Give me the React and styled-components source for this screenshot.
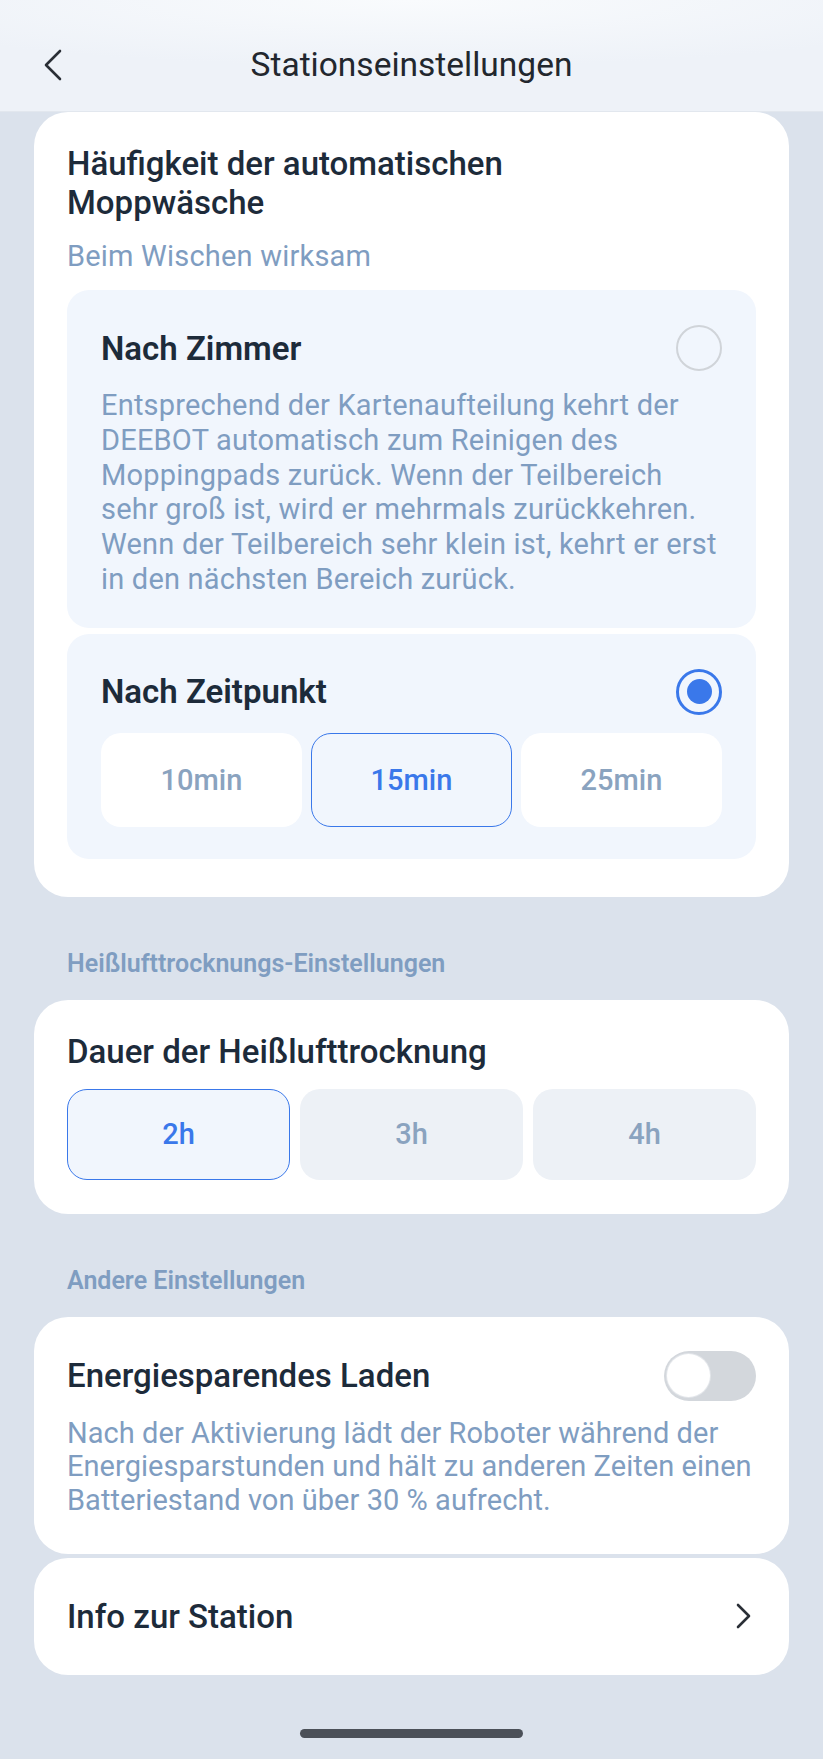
import React from "react";
import styled, { createGlobalStyle, css } from "styled-components";

const COLORS = {
  page: "#dbe2ec",
  header: "#eef2f8",
  card: "#ffffff",
  option: "#f1f6fd",
  chip: "#edf1f6",
  ink: "#1d2b3a",
  muted: "#7f9dc1",
  chipText: "#8aa3bf",
  blue: "#3a78ea",
  track: "#d3d7dc",
};

const GlobalStyle = createGlobalStyle`
  body {
    margin: 0;
    background: ${COLORS.page};
    font-family: Roboto, "Liberation Sans", sans-serif;
    -webkit-font-smoothing: antialiased;
  }
`;

const Page = styled.div`
  min-height: 1759px;
  display: flex;
  flex-direction: column;
  background: ${COLORS.page};
`;

const Header = styled.header`
  height: 111px;
  border-bottom: 1px solid #e2e7ee;
  background: radial-gradient(ellipse 70% 60% at 50% 0%, #f9fbfd 0%, ${COLORS.header} 100%);
  display: grid;
  grid-template-columns: 90px 1fr 90px;
  align-items: center;
  .title {
    text-align: center;
    font-size: 33.5px;
    color: #22272e;
    padding-top: 18px;
  }
  .back {
    padding: 18px 0 0 44px;
    display: flex;
  }
`;

const Content = styled.main`
  padding: 0 34px;
  display: flex;
  flex-direction: column;
`;

const Card = styled.section`
  background: ${COLORS.card};
  border-radius: 34px;
  padding: ${(p) => p.$pad || "32px 33px 38px"};
  ${(p) =>
    p.$gap &&
    css`
      margin-top: ${p.$gap}px;
    `}
`;

const CardTitle = styled.h2`
  margin: 0;
  font-size: 33px;
  line-height: ${(p) => p.$lh || 39}px;
  font-weight: 500;
  color: ${COLORS.ink};
  max-width: 450px;
`;

const Muted = styled.p`
  margin: ${(p) => p.$mt || 0}px 0 0;
  font-size: 29px;
  letter-spacing: ${(p) => p.$ls ?? 0.2}px;
  line-height: ${(p) => p.$lh || 35}px;
  color: ${COLORS.muted};
`;

const SectionLabel = styled.div`
  margin: 52px 0 21px 33px;
  font-size: 25px;
  line-height: 30px;
  font-weight: 600;
  color: ${COLORS.muted};
`;

const Options = styled.div`
  margin-top: 16px;
  display: flex;
  flex-direction: column;
  gap: 6px;
`;

const Option = styled.div`
  background: ${COLORS.option};
  border-radius: 22px;
  padding: 35px 34px ${(p) => p.$pb}px;
`;

const Row = styled.div`
  display: flex;
  align-items: center;
  justify-content: space-between;
  min-height: ${(p) => p.$h || 46}px;
`;

const OptionTitle = styled.div`
  font-size: 33px;
  font-weight: 600;
  color: ${COLORS.ink};
`;

const Radio = styled.span`
  width: 46px;
  height: 46px;
  box-sizing: border-box;
  border-radius: 50%;
  border: ${(p) => (p.$on ? `3px solid ${COLORS.blue}` : "2.5px solid #d0d4d9")};
  display: flex;
  align-items: center;
  justify-content: center;
  &::after {
    content: "";
    width: 25px;
    height: 25px;
    border-radius: 50%;
    background: ${(p) => (p.$on ? COLORS.blue : "transparent")};
  }
`;

const Chips = styled.div`
  margin-top: ${(p) => p.$mt}px;
  display: grid;
  grid-template-columns: repeat(3, 1fr);
  gap: ${(p) => p.$gap}px;
`;

const Chip = styled.button`
  height: ${(p) => p.$h}px;
  box-sizing: border-box;
  border-radius: 20px;
  border: 1.5px solid ${(p) => (p.$on ? COLORS.blue : "transparent")};
  background: ${(p) => (p.$on ? COLORS.option : p.$bg)};
  color: ${(p) => (p.$on ? COLORS.blue : COLORS.chipText)};
  font-family: inherit;
  font-size: 29px;
  font-weight: 500;
  padding: 0;
`;

const Toggle = styled.span`
  width: 92px;
  height: 50px;
  border-radius: 25px;
  background: ${COLORS.track};
  display: flex;
  align-items: center;
  padding: 0 3px;
  box-sizing: border-box;
  &::before {
    content: "";
    width: 43px;
    height: 43px;
    border-radius: 50%;
    background: #fff;
    box-shadow: 0 0 0 1px #e3e6ea;
  }
`;

const LinkCard = styled(Card)`
  height: 117px;
  box-sizing: border-box;
  display: flex;
  align-items: center;
  justify-content: space-between;
  padding: 0 38px 0 33px;
  font-size: 33px;
  font-weight: 500;
  color: ${COLORS.ink};
`;

const HomeBar = styled.div`
  width: 223px;
  height: 9px;
  border-radius: 5px;
  background: #4b5058;
  margin: 54px auto 0;
`;

const Chevron = ({ dir = "left", w = 18, h = 32, color = "#2a2f36" }) => (
  <svg width={w} height={h} viewBox={`0 0 ${w} ${h}`} fill="none">
    <polyline
      points={
        dir === "left"
          ? `${w - 2},2 2,${h / 2} ${w - 2},${h - 2}`
          : `2,2 ${w - 2},${h / 2} 2,${h - 2}`
      }
      stroke={color}
      strokeWidth="2.6"
      strokeLinecap="round"
      strokeLinejoin="round"
    />
  </svg>
);

const minutes = ["10min", "15min", "25min"];
const hours = ["2h", "3h", "4h"];

const App = () => (
  <Page>
    <GlobalStyle />
    <Header>
      <div className="back">
        <Chevron dir="left" />
      </div>
      <div className="title">Stationseinstellungen</div>
      <div />
    </Header>
    <Content>
      <Card>
        <CardTitle>Häufigkeit der automatischen Moppwäsche</CardTitle>
        <Muted $mt={17}>Beim Wischen wirksam</Muted>
        <Options>
          <Option $pb={31}>
            <Row>
              <OptionTitle>Nach Zimmer</OptionTitle>
              <Radio />
            </Row>
            <Muted $mt={17} $lh={34.8}>
              Entsprechend der Kartenaufteilung kehrt der DEEBOT automatisch zum
              Reinigen des Moppingpads zurück. Wenn der Teilbereich sehr groß
              ist, wird er mehrmals zurückkehren. Wenn der Teilbereich sehr klein
              ist, kehrt er erst in den nächsten Bereich zurück.
            </Muted>
          </Option>
          <Option $pb={32}>
            <Row>
              <OptionTitle>Nach Zeitpunkt</OptionTitle>
              <Radio $on />
            </Row>
            <Chips $mt={18} $gap={9}>
              {minutes.map((m) => (
                <Chip key={m} $h={94} $bg="#ffffff" $on={m === "15min"}>
                  {m}
                </Chip>
              ))}
            </Chips>
          </Option>
        </Options>
      </Card>

      <SectionLabel>Heißlufttrocknungs-Einstellungen</SectionLabel>
      <Card $pad="32px 33px 34px">
        <CardTitle $lh={40}>Dauer der Heißlufttrocknung</CardTitle>
        <Chips $mt={17} $gap={10}>
          {hours.map((h) => (
            <Chip key={h} $h={91} $bg={COLORS.chip} $on={h === "2h"}>
              {h}
            </Chip>
          ))}
        </Chips>
      </Card>

      <SectionLabel>Andere Einstellungen</SectionLabel>
      <Card $pad="34px 33px 36px">
        <Row $h={50}>
          <CardTitle $lh={50}>Energiesparendes Laden</CardTitle>
          <Toggle />
        </Row>
        <Muted $mt={16} $lh={33.7} $ls={0.05}>
          Nach der Aktivierung lädt der Roboter während der Energiesparstunden
          und hält zu anderen Zeiten einen Batteriestand von über 30 % aufrecht.
        </Muted>
      </Card>
      <LinkCard $gap={4}>
        <span>Info zur Station</span>
        <Chevron dir="right" w={15} h={26} />
      </LinkCard>
    </Content>
    <HomeBar />
  </Page>
);

export default App;
